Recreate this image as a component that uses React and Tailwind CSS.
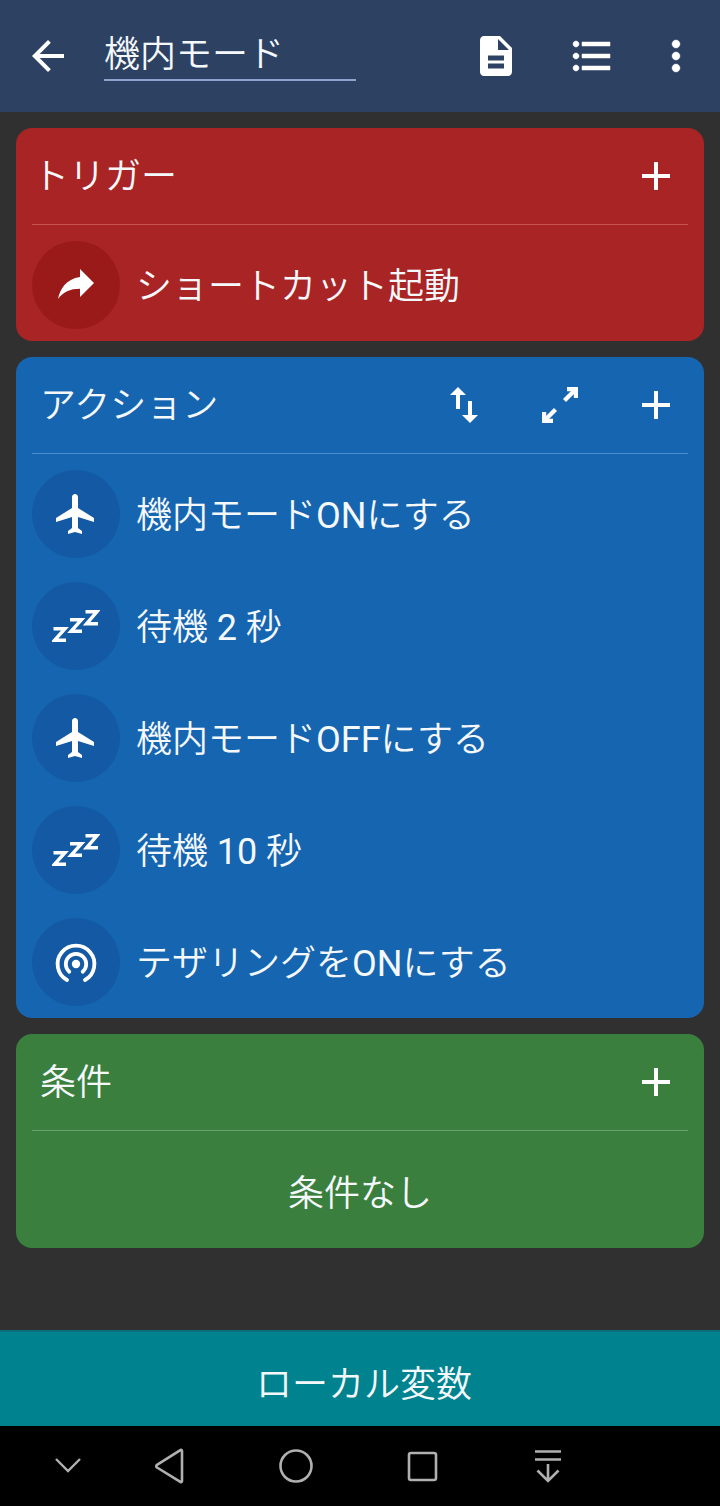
const FONT = { fontFamily: 'Roboto, "Noto Sans CJK JP", sans-serif' };

function Icon({ d, size = 48, thick = 0, className = '' }) {
  return (
    <svg viewBox="0 0 24 24" width={size} height={size} fill="white" stroke={thick ? 'white' : 'none'} strokeWidth={thick} className={`shrink-0 ${className}`}>
      <path d={d} />
    </svg>
  );
}

const paths = {
  back: 'M20 11H7.83l5.59-5.59L12 4l-8 8 8 8 1.41-1.41L7.83 13H20v-2z',
  doc: 'M14 2H6c-1.1 0-1.99.9-1.99 2L4 20c0 1.1.89 2 1.99 2H18c1.1 0 2-.9 2-2V8l-6-6zM16 18.2H8v-2.4h8v2.4zM16 14.200H8v-2.4h8v2.4zM13 9V3.500L18.500 9H13z',
  list: 'M4 10.5c-.83 0-1.5.67-1.5 1.5s.67 1.5 1.5 1.5 1.5-.67 1.5-1.5-.67-1.5-1.500-1.500zm0-6c-.83 0-1.5.67-1.5 1.5S3.17 7.5 4 7.5 5.5 6.83 5.5 6 4.83 4.5 4 4.5zm0 12c-.83 0-1.5.68-1.5 1.5s.68 1.5 1.5 1.5 1.5-.68 1.5-1.5-.67-1.5-1.5-1.5zM7 19h14v-2H7v2zm0-6h14v-2H7v2zm0-8v2h14V5H7z',
  more: 'M12 8c1.1 0 2-.9 2-2s-.9-2-2-2-2 .9-2 2 .9 2 2 2zm0 2c-1.1 0-2 .9-2 2s.9 2 2 2 2-.9 2-2-.9-2-2-2zm0 6c-1.1 0-2 .9-2 2s.9 2 2 2 2-.9 2-2-.9-2-2-2z',
  add: 'M19 13h-6v6h-2v-6H5v-2h6V5h2v6h6v2z',
  forward: 'M14 9V5l7 7-7 7v-4.100c-5 0-8.500 1.600-11 5.100 1-5 4-10 11-11z',
  swap: 'M16 17.010V10h-2v7.010h-3L15 21l4-3.990h-3zM9 3L5 6.990h3V14h2V6.990h3L9 3z',
  plane: 'M21 16v-2l-8-5V3.5c0-.83-.67-1.5-1.5-1.5S10 2.670 10 3.500V9l-8 5v2l8-2.500V19l-2 1.500V22l3.500-1 3.500 1v-1.500L13 19v-5.500l8 2.500z',
};

function Expand() {
  return (
    <svg viewBox="0 0 48 48" width={48} height={48} fill="none" stroke="white" strokeWidth="4.200" className="shrink-0">
      <path d="M31 8.100H39.900V17" />
      <path d="M39.500 8.500L28.500 19.500" />
      <path d="M8.100 31V39.900H17" />
      <path d="M8.500 39.500L19.500 28.500" />
    </svg>
  );
}

function Zzz() {
  return (
    <svg viewBox="0 0 48 48" width={48} height={48} fill="none" stroke="white" strokeWidth="3.400" className="shrink-0">
      <path d="M1.500 26.700H13L2.500 38.300H14" />
      <path d="M18 17.700H29.500L19 29.300H30" />
      <path d="M33.500 9.700H45L34.500 21.800H46" />
    </svg>
  );
}

function Tether() {
  return (
    <svg viewBox="0 0 48 48" width={48} height={48} fill="none" stroke="white" strokeWidth="3.800" strokeLinecap="round" className="shrink-0">
      <circle cx="24" cy="26" r="4.200" fill="white" stroke="none" />
      <path d="M17.300 33.700a10.200 10.200 0 1 1 13.400 0" />
      <path d="M15 42a18.400 18.400 0 1 1 18 0" />
    </svg>
  );
}

function Badge({ bg, children }) {
  return <div className={`flex h-[88px] w-[88px] shrink-0 items-center justify-center rounded-full ${bg}`}>{children}</div>;
}

function Row({ bg, icon, children }) {
  return (
    <div className="flex h-[112px] items-center pl-4">
      <Badge bg={bg}>{icon}</Badge>
      <span className="ml-4 pt-1 whitespace-nowrap text-[36px] leading-none font-[350] text-[#f5f8fb]">{children}</span>
    </div>
  );
}

function CardHead({ title, line, left, children }) {
  return (
    <>
      <div className={`flex h-24 items-center justify-between pr-6 ${left}`}>
        <span className="pt-[2px] text-[36px] leading-none font-[350] text-[#f5f8fb]">{title}</span>
        <div className="flex items-center gap-12">{children}</div>
      </div>
      <div className={`mx-4 h-px ${line}`} />
    </>
  );
}

const Latin = ({ children }) => <span className="font-normal">{children}</span>;

const actions = [
  { id: 'on', icon: <Icon d={paths.plane} />, label: <>機内モード<Latin>ON</Latin>にする</> },
  { id: 'wait2', icon: <Zzz />, label: <>待機 <Latin>2</Latin> 秒</> },
  { id: 'off', icon: <Icon d={paths.plane} />, label: <>機内モード<Latin>OFF</Latin>にする</> },
  { id: 'wait10', icon: <Zzz />, label: <>待機 <Latin>10</Latin> 秒</> },
  { id: 'tether', icon: <Tether />, label: <>テザリングを<Latin>ON</Latin>にする</> },
];

export default function App() {
  return (
    <div style={FONT} className="flex h-[1506px] w-[720px] flex-col overflow-hidden bg-[#303030]">
      <header className="flex h-28 shrink-0 items-center bg-[#2d4263] pl-6 pr-5">
        <Icon d={paths.back} />
        <div className="ml-8 flex h-[50px] w-[252px] items-center border-b-2 border-[#8fa3cf] text-[36px] leading-none font-[350] text-[#f5f8fb]">
          機内モード
        </div>
        <div className="ml-auto flex items-center">
          <Icon d={paths.doc} />
          <Icon d={paths.list} thick={0.25} className="ml-12" />
          <Icon d={paths.more} thick={0.2} className="ml-9" />
        </div>
      </header>

      <main className="flex flex-1 flex-col gap-4 px-4 pt-4">
        <section className="h-[213px] rounded-2xl bg-[#a92424]">
          <CardHead title="トリガー" line="bg-[#c75252]" left="pl-[17px]">
            <Icon d={paths.add} />
          </CardHead>
          <div className="flex h-[116px] items-center pt-1 pl-4">
            <Badge bg="bg-[#9a1a1a]"><Icon d={paths.forward} className="mb-1" /></Badge>
            <span className="ml-4 pt-1 whitespace-nowrap text-[36px] leading-none font-[350] text-[#f5f8fb]">ショートカット起動</span>
          </div>
        </section>

        <section className="h-[661px] rounded-2xl bg-[#1665b0]">
          <CardHead title="アクション" line="bg-[#4a8ccc]" left="pl-6">
            <Icon d={paths.swap} />
            <Expand />
            <Icon d={paths.add} />
          </CardHead>
          <div className="pt-[4px]">
            {actions.map((a) => (
              <Row key={a.id} bg="bg-[#1359a3]" icon={a.icon}>{a.label}</Row>
            ))}
          </div>
        </section>

        <section className="h-[214px] rounded-2xl bg-[#3a7f3d]">
          <CardHead title="条件" line="bg-[#6aa06c]" left="pl-6">
            <Icon d={paths.add} />
          </CardHead>
          <div className="flex h-[117px] items-center justify-center pt-2 text-[36px] leading-none font-[350] text-[#f5f8fb]">条件なし</div>
        </section>
      </main>

      <div className="flex h-[96px] shrink-0 items-center justify-center border-t-2 border-[#0b6f79] bg-[#00838f] pt-3 pl-2 text-[36px] leading-none font-[350] text-[#f5f8fb]">
        ローカル変数
      </div>

      <nav className="relative h-20 shrink-0 bg-black">
        <svg viewBox="0 0 720 80" width={720} height={80} fill="none" stroke="#b0b0b0" strokeWidth="2.600">
          <path d="M56 33l12 12 12-12" strokeWidth="2.400" />
          <path d="M182 25v30a1 1 0 0 1-1.700.8L157 41.500a1.500 1.500 0 0 1 0-2.600l23.300-14.700a1 1 0 0 1 1.700.8z" />
          <circle cx="296" cy="40" r="15.500" />
          <rect x="409" y="27" width="27" height="27" rx="2" />
          <path d="M535 25.500h26M535 33.500h26M548 38v17M537.500 44.500L548 55l10.500-10.500" />
        </svg>
      </nav>
    </div>
  );
}
